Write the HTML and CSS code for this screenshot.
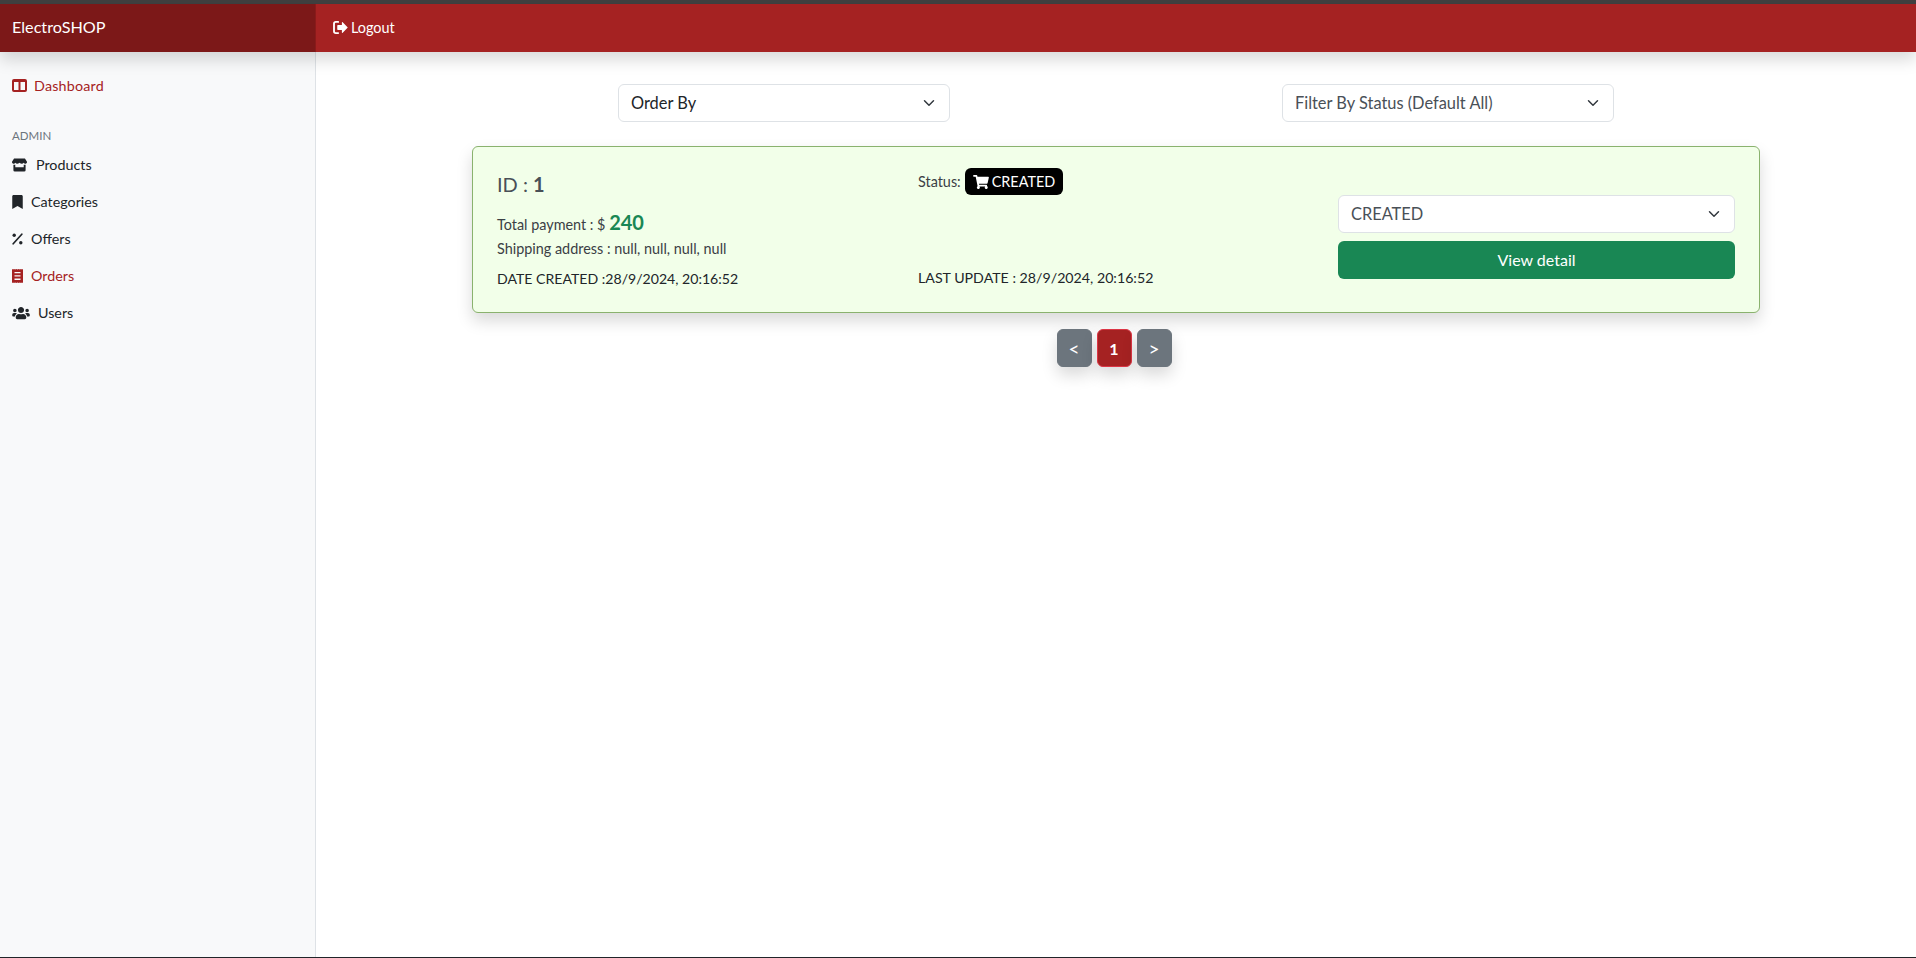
FILE: index.html
```html
<!DOCTYPE html>
<html lang="en">
<head>
    <meta charset="UTF-8">
    <title>ElectroSHOP</title>
    <link rel="stylesheet" href="styles.css">
</head>
<body>
    <div class="top-strip"></div>
    <nav class="navbar">
        <a class="brand" href="#">ElectroSHOP</a>
        <a class="logout" href="#">
            <svg class="logout-icon" viewBox="0 0 16 14"><path d="M5.5 1H3a2 2 0 0 0-2 2v8a2 2 0 0 0 2 2h2.5" fill="none" stroke="currentColor" stroke-width="2" stroke-linecap="round"/><path d="M9.5 1.6a.5.5 0 0 1 .85-.35L15.6 6.6a.6.6 0 0 1 0 .8l-5.25 5.35a.5.5 0 0 1-.85-.35V9.6H5.2a.7.7 0 0 1-.7-.7V5.1a.7.7 0 0 1 .7-.7h4.3z" fill="currentColor"/></svg>
            Logout
        </a>
    </nav>

    <div class="layout">
        <aside class="sidebar">
            <a class="side-link active dash" href="#">
                <svg class="ico ico-dash" viewBox="0 0 15 13"><path fill-rule="evenodd" d="M2 0h11a2 2 0 0 1 2 2v9a2 2 0 0 1-2 2H2a2 2 0 0 1-2-2V2a2 2 0 0 1 2-2zm0 3v8h4.5V3zm6.5 0v8H13V3z"/></svg>
                Dashboard
            </a>
            <div class="side-heading">ADMIN</div>
            <a class="side-link" href="#">
                <svg class="ico ico-store" viewBox="0 0 16 14"><path d="M2.2 0h11.6L16 3.4c.2 1.4-.8 2.3-1.8 2.3-.8 0-1.4-.4-1.8-1-.4.6-1.1 1-1.9 1-.9 0-1.6-.4-2.5-1-.9.6-1.6 1-2.5 1-.8 0-1.500-.4-1.900-1-.4.600-1 1-1.800 1C.8 5.700-.2 4.800 0 3.400z"/><path fill-rule="evenodd" d="M1.500 6.800h2v2.600h9V6.800h2v5.700a1.500 1.500 0 0 1-1.500 1.500H3a1.500 1.500 0 0 1-1.500-1.500z"/></svg>
                <span class="gap-products">Products</span>
            </a>
            <a class="side-link" href="#">
                <svg class="ico ico-mark" viewBox="0 0 384 512"><path d="M0 512V48C0 21.49 21.49 0 48 0h288c26.51 0 48 21.49 48 48v464L192 400 0 512z"/></svg>
                Categories
            </a>
            <a class="side-link" href="#">
                <svg class="ico ico-mark" viewBox="0 0 11 14"><path d="M9.800 2.200 1.200 11.800" fill="none" stroke="currentColor" stroke-width="1.700" stroke-linecap="round"/><circle cx="2.200" cy="3.200" r="1.700"/><circle cx="8.800" cy="10.800" r="1.700"/></svg>
                Offers
            </a>
            <a class="side-link active" href="#">
                <svg class="ico ico-mark" viewBox="0 0 11 14"><path fill-rule="evenodd" d="M0 0l1 .6L2 0l1.100.6L4.200 0l1.300.6L6.800 0l1.100.6L9 0l1 .6L11 0v14l-1-.6-1 .6-1.100-.6-1.100.6-1.300-.6-1.300.6-1.100-.6L2 14l-1-.6-1 .6zm2.500 3v1.300h6V3zm0 3.300v1.300h6V6.300zm0 3.300v1.300h6V9.600z"/></svg>
                Orders
            </a>
            <a class="side-link" href="#">
                <svg class="ico ico-users" viewBox="0 0 640 512"><path d="M96 224c35.300 0 64-28.700 64-64s-28.700-64-64-64-64 28.700-64 64 28.700 64 64 64zm448 0c35.300 0 64-28.700 64-64s-28.700-64-64-64-64 28.700-64 64 28.700 64 64 64zm32 32h-64c-17.600 0-33.500 7.100-45.100 18.600 40.300 22.100 68.900 62 75.100 109.400h66c17.700 0 32-14.300 32-32v-32c0-35.300-28.700-64-64-64zm-256 0c61.900 0 112-50.100 112-112S381.900 32 320 32 208 82.100 208 144s50.100 112 112 112zm76.800 32h-8.300c-20.800 10-43.900 16-68.500 16s-47.600-6-68.500-16h-8.300C179.600 288 128 339.600 128 403.200V432c0 26.500 21.500 48 48 48h288c26.500 0 48-21.500 48-48v-28.800c0-63.600-51.600-115.200-115.200-115.200zm-223.700-13.400C161.500 263.100 145.600 256 128 256H64c-35.300 0-64 28.700-64 64v32c0 17.700 14.300 32 32 32h65.900c6.300-47.400 34.900-87.300 75.200-109.400z"/></svg>
                <span class="gap-users">Users</span>
            </a>
        </aside>

        <main class="content">
            <div class="filters">
                <select class="form-select order-by">
                    <option>Order By</option>
                </select>
                <select class="form-select">
                    <option>Filter By Status (Default All)</option>
                </select>
            </div>

            <div class="order-card">
                <div class="order-col">
                    <h2 class="order-id">ID : <b>1</b></h2>
                    <p class="order-total">Total payment : $ <b class="price">240</b></p>
                    <p class="order-address">Shipping address : null, null, null, null</p>
                    <p class="order-date">DATE CREATED :28/9/2024, 20:16:52</p>
                </div>
                <div class="order-col">
                    <p class="order-status">Status:
                        <span class="badge">
                            <svg class="cart" viewBox="0 0 576 512"><path d="M528.120 301.319l47.273-208C578.806 78.301 567.391 64 551.990 64H159.208l-9.166-44.810C147.758 8.021 137.930 0 126.529 0H24C10.745 0 0 10.745 0 24v16c0 13.255 10.745 24 24 24h69.883l70.248 343.435C147.325 417.100 136 435.222 136 456c0 30.928 25.072 56 56 56s56-25.072 56-56c0-15.674-6.447-29.835-16.824-40h209.647C430.447 426.165 424 440.326 424 456c0 30.928 25.072 56 56 56s56-25.072 56-56c0-22.172-12.888-41.332-31.579-50.405l5.517-24.276c3.413-15.018-8.002-29.319-23.403-29.319H218.117l-6.545-32h293.145c11.206 0 20.920-7.754 23.403-18.681z"/></svg>
                            CREATED
                        </span>
                    </p>
                    <p class="order-date last-update">LAST UPDATE : 28/9/2024, 20:16:52</p>
                </div>
                <div class="order-actions">
                    <select class="form-select">
                        <option>CREATED</option>
                    </select>
                    <button class="btn-detail">View detail</button>
                </div>
            </div>

            <div class="pagination">
                <button class="page-btn arrow">&lt;</button>
                <button class="page-btn current">1</button>
                <button class="page-btn arrow">&gt;</button>
            </div>
        </main>
    </div>
</body>
</html>
```

FILE: styles.css
```css
* {
    box-sizing: border-box;
}
html, body {
    height: 100%;
}
body {
    margin: 0;
    display: flex;
    flex-direction: column;
    overflow: hidden;
    background-color: #fff;
    color: #212529;
    font-family: "Lato", "Noto Sans", sans-serif;
    font-size: 14px;
    border-bottom: 1px solid #212529;
}
a {
    text-decoration: none;
}
p, h2 {
    margin: 0;
}
.top-strip {
    height: 4px;
    background-color: #404040;
}
.navbar {
    position: relative;
    z-index: 2;
    display: flex;
    height: 48px;
    background-color: #a52222;
    box-shadow: 0 8px 16px rgba(0,0,0,0.15);
}
.brand {
    width: 316px;
    padding: 0 12px;
    line-height: 46px;
    background-color: #7c1818;
    border-right: 1px solid #8a1a1a;
    color: #fff;
    font-size: 16.2px;
}
.logout {
    display: flex;
    align-items: center;
    gap: 3px;
    padding: 0 17px 2px 17px;
    color: #fff;
    font-size: 14.4px;
}
.logout-icon {
    width: 15px;
    height: 13px;
}
.layout {
    flex: 1;
    display: flex;
    min-height: 0;
}
.sidebar {
    width: 316px;
    flex: none;
    padding-top: 15px;
    background-color: #f8f9fa;
    border-right: 1px solid #dee2e6;
}
.side-link {
    display: flex;
    align-items: center;
    gap: 8px;
    height: 37px;
    padding-left: 12px;
    color: #212529;
    font-size: 14.3px;
}
.side-link.active {
    color: #a52222;
}
.side-link.dash {
    gap: 7px;
    height: 36px;
    letter-spacing: 0.2px;
}
.side-heading {
    margin-top: 22px;
    height: 21px;
    padding-left: 12px;
    line-height: 22px;
    color: #6c757d;
    font-size: 11.5px;
}
.ico {
    flex: none;
    fill: currentColor;
}
.ico-dash {
    width: 15px;
    height: 13px;
}
.ico-store {
    width: 15px;
    height: 14px;
}
.ico-mark {
    width: 11px;
    height: 14px;
}
.ico-users {
    width: 18px;
    height: 14px;
}
.gap-products {
    margin-left: 1px;
}
.content {
    flex: 1;
    padding-top: 32px;
}
.filters {
    display: grid;
    grid-template-columns: 664px 664px;
    justify-content: center;
    justify-items: center;
}
.filters .form-select {
    width: 332px;
}
.form-select {
    display: block;
    width: 100%;
    height: 38px;
    padding: 0 36px 2px 12px;
    border: 1px solid #dee2e6;
    border-radius: 6px;
    background-color: #fff;
    background-image: url("data:image/svg+xml,%3csvg xmlns='http://www.w3.org/2000/svg' viewBox='0 0 16 16'%3e%3cpath fill='none' stroke='%23343a40' stroke-linecap='round' stroke-linejoin='round' stroke-width='2' d='m2 5 6 6 6-6'/%3e%3c/svg%3e");
    background-repeat: no-repeat;
    background-position: right 12px center;
    background-size: 16px 12px;
    color: #495057;
    font-family: inherit;
    font-size: 16.4px;
    appearance: none;
}
.order-by {
    color: #212529;
}
.order-card {
    display: grid;
    grid-template-columns: 397px 396px 397px;
    column-gap: 24px;
    width: 1288px;
    height: 167px;
    margin: 24px auto 0 auto;
    padding: 16px 24px 0 24px;
    background-color: #f2ffe9;
    border: 1px solid #8ab26e;
    border-radius: 6px;
    box-shadow: 0 8px 16px rgba(0,0,0,0.15);
}
.order-id {
    margin-top: 9px;
    color: #495057;
    font-size: 20px;
    font-weight: 400;
    line-height: 24px;
}
.order-total {
    margin-top: 14px;
    color: #3b4045;
    font-size: 14.4px;
    line-height: 24px;
}
.price {
    color: #198754;
    font-size: 20px;
}
.order-address {
    margin-top: 2px;
    color: #3b4045;
    font-size: 14.4px;
    line-height: 20px;
}
.order-date {
    margin-top: 10px;
    font-size: 14.1px;
    line-height: 20px;
}
.order-status {
    display: flex;
    align-items: center;
    gap: 4px;
    height: 27px;
    margin-top: 5px;
    color: #3b4045;
    font-size: 14.4px;
}
.last-update {
    margin-top: 73px;
    font-size: 14.2px;
}
.badge {
    display: inline-flex;
    align-items: center;
    gap: 3px;
    height: 27px;
    padding: 0 8px;
    background-color: #000;
    border-radius: 6px;
    color: #fff;
}
.cart {
    width: 16px;
    height: 14px;
    fill: #fff;
}
.order-actions {
    padding-top: 32px;
}
.btn-detail {
    display: block;
    width: 100%;
    height: 38px;
    margin-top: 8px;
    padding-bottom: 3px;
    background-color: #198754;
    border: none;
    border-radius: 6px;
    color: #fff;
    font-family: inherit;
    font-size: 16px;
}
.pagination {
    display: flex;
    justify-content: center;
    gap: 5px;
    margin-top: 16px;
    margin-left: -4px;
}
.page-btn {
    width: 35px;
    height: 38px;
    background-color: #6c757d;
    border: 1px solid #6c757d;
    border-radius: 6px;
    box-shadow: 0 8px 16px rgba(0,0,0,0.15);
    color: #fff;
    font-family: inherit;
    font-size: 16px;
    font-weight: 700;
}
.page-btn.arrow {
    font-size: 19px;
    font-weight: 400;
}
.page-btn.current {
    background-color: #a52222;
    border-color: #dc3545;
}
```
